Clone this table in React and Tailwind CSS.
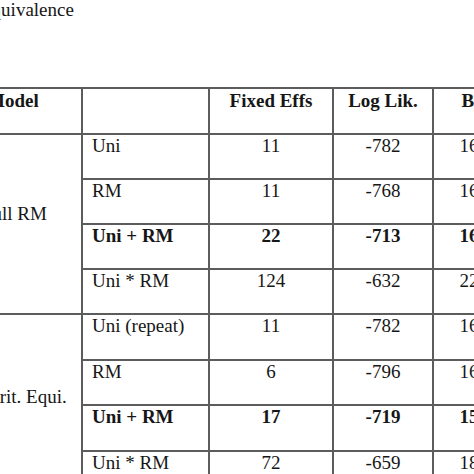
const rows = [
  { group: 0, model: "Uni", fixed: "11", loglik: "-782", bic: "1652", h: "h-[45px]" },
  { group: 0, model: "RM", fixed: "11", loglik: "-768", bic: "1624", h: "h-[45px]" },
  { group: 0, model: "Uni + RM", fixed: "22", loglik: "-713", bic: "1602", h: "h-[45px]", bold: true },
  { group: 0, model: "Uni * RM", fixed: "124", loglik: "-632", bic: "2256", h: "h-[45px]" },
  { group: 1, model: "Uni (repeat)", fixed: "11", loglik: "-782", bic: "1652", h: "h-[46px]" },
  { group: 1, model: "RM", fixed: "6", loglik: "-796", bic: "1640", h: "h-[45px]" },
  { group: 1, model: "Uni + RM", fixed: "17", loglik: "-719", bic: "1574", h: "h-[46px]", bold: true },
  { group: 1, model: "Uni * RM", fixed: "72", loglik: "-659", bic: "1894", h: "h-[45px]" },
];

const cell = "border-r-2 border-b-2 border-[#5c5c5c]";

const App = () => {
  return (
    <div className="w-[474px] h-[474px] overflow-hidden bg-white text-[#161616] font-['Liberation_Serif',serif] text-[19px] leading-[22px]">
      <div className="-ml-[24px] -mt-[1px] flex flex-col">
        <p className="pl-[4px]">Equivalence</p>

        <div className="mt-[66px] grid w-[549px] grid-cols-[105px_127px_124px_100px_91px] border-t-2 border-l-2 border-[#5c5c5c]">
          {/* header */}
          <div className={`${cell} h-[46px] pl-[9px] pt-[1px] font-bold`}>Model</div>
          <div className={`${cell} h-[46px]`} />
          <div className={`${cell} h-[46px] pt-[1px] text-center font-bold`}>Fixed Effs</div>
          <div className={`${cell} h-[46px] pt-[1px] text-center font-bold`}>Log Lik.</div>
          <div className={`${cell} h-[46px] pt-[1px] text-center font-bold`}>BIC</div>

          {rows.map((r, i) => (
            <div key={i} className="contents">
              {i === 0 && (
                <div className={`${cell} row-span-4 flex items-center pl-[4px] pb-[20px]`}>Full RM</div>
              )}
              {i === 4 && (
                <div className={`${cell} row-span-4 flex items-center pl-[9px] pb-[16px]`}>Crit. Equi.</div>
              )}
              <div className={`${cell} ${r.h} pl-[9px] ${r.bold ? "font-bold" : ""}`}>{r.model}</div>
              <div className={`${cell} ${r.h} text-center ${r.bold ? "font-bold" : ""}`}>{r.fixed}</div>
              <div className={`${cell} ${r.h} text-center ${r.bold ? "font-bold" : ""}`}>{r.loglik}</div>
              <div className={`${cell} ${r.h} text-center ${r.bold ? "font-bold" : ""}`}>{r.bic}</div>
            </div>
          ))}
        </div>
      </div>
    </div>
  );
};

export default App;
